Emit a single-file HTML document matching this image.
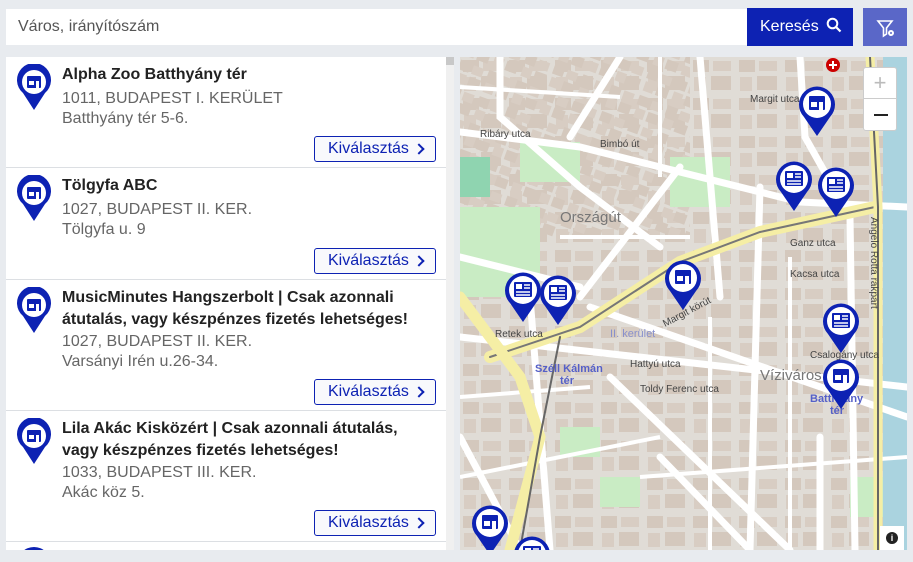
<!DOCTYPE html>
<html><head><meta charset="utf-8"><style>
*{box-sizing:border-box;margin:0;padding:0}
body{width:913px;height:562px;background:#e8ebef;font-family:"Liberation Sans",Roboto,sans-serif;position:relative;overflow:hidden}
.inp{position:absolute;left:6px;top:9px;width:741px;height:36px;background:#fff;color:#555;font-size:16px;line-height:36px;padding-left:12px}
.btn{position:absolute;left:747px;top:8px;width:106px;height:38px;background:#0d22b3;color:#fff;font-size:16px;line-height:38px;padding-left:13px}
.flt{position:absolute;left:863px;top:8px;width:44px;height:38px;background:#5a67c8}
.list{position:absolute;left:6px;top:57px;width:440px;height:493px;background:#fff;overflow:hidden}
.sb{position:absolute;left:446px;top:57px;width:8px;height:493px;background:#f0f0f0}
.sb div{width:8px;height:8px;background:#c8c8c8;margin-top:0}
.it{position:absolute;left:0;width:440px;border-bottom:1px solid #dcdfe3}
.it h3{position:absolute;left:56px;top:7px;width:370px;font-size:16px;font-weight:bold;color:#222;line-height:22px}
.it p{position:absolute;left:56px;font-size:16px;color:#666;line-height:20px}
.kb{position:absolute;left:308px;width:122px;height:26px;border:1px solid #0d22b3;border-radius:3px;color:#0d22b3;font-size:16px;line-height:24px;padding-left:13px;background:#f8f9fc}
.kb:after{content:"";position:absolute;right:12px;top:8px;width:6px;height:6px;border-top:2px solid #0d22b3;border-right:2px solid #0d22b3;transform:rotate(45deg)}
.pin{position:absolute;left:10px}
.map{position:absolute;left:460px;top:57px;width:447px;height:493px;overflow:hidden;background:#e0dcd6}
</style></head><body>
<div class="inp">Város, irányítószám</div>
<div class="btn">Keresés <svg width="16" height="16" viewBox="0 0 16 16" style="vertical-align:-2px;margin-left:3px"><circle cx="6.5" cy="6.5" r="4.8" fill="none" stroke="#fff" stroke-width="2"/><path d="M10 10l4.5 4.5" stroke="#fff" stroke-width="2.2"/></svg></div>
<div class="flt"><svg width="44" height="38"><path d="M15 13h14l-5.5 7v6l-3 2v-8z" fill="none" stroke="#fff" stroke-width="1.6"/><circle cx="28" cy="25" r="3" fill="#fff"/><circle cx="28" cy="25" r="1" fill="#5a67c8"/></svg></div>

<div class="list">
 <div class="it" style="top:0;height:111px">
  <svg class="pin" width="36" height="50" style="top:7px"><path d="M18 46L7 29A17 17 0 1 1 29 29z" fill="#0d22b3"/><circle cx="18" cy="18" r="12" fill="#fff"/><rect x="11" y="12" width="14" height="12" rx="1" fill="#0d22b3"/><rect x="13" y="17" width="5" height="4" fill="#fff"/><rect x="20" y="17" width="3" height="7" fill="#fff"/></svg>
  <h3>Alpha Zoo Batthyány tér</h3><p style="top:32px">1011, BUDAPEST I. KERÜLET<br>Batthyány tér 5-6.</p>
  <div class="kb" style="top:79px">Kiválasztás</div></div>
 <div class="it" style="top:111px;height:112px">
  <svg class="pin" width="36" height="50" style="top:7px"><path d="M18 46L7 29A17 17 0 1 1 29 29z" fill="#0d22b3"/><circle cx="18" cy="18" r="12" fill="#fff"/><rect x="11" y="12" width="14" height="12" rx="1" fill="#0d22b3"/><rect x="13" y="17" width="5" height="4" fill="#fff"/><rect x="20" y="17" width="3" height="7" fill="#fff"/></svg>
  <h3>Tölgyfa ABC</h3><p style="top:32px">1027, BUDAPEST II. KER.<br>Tölgyfa u. 9</p>
  <div class="kb" style="top:80px">Kiválasztás</div></div>
 <div class="it" style="top:223px;height:131px">
  <svg class="pin" width="36" height="50" style="top:7px"><path d="M18 46L7 29A17 17 0 1 1 29 29z" fill="#0d22b3"/><circle cx="18" cy="18" r="12" fill="#fff"/><rect x="11" y="12" width="14" height="12" rx="1" fill="#0d22b3"/><rect x="13" y="17" width="5" height="4" fill="#fff"/><rect x="20" y="17" width="3" height="7" fill="#fff"/></svg>
  <h3>MusicMinutes Hangszerbolt | Csak azonnali átutalás, vagy készpénzes fizetés lehetséges!</h3><p style="top:52px">1027, BUDAPEST II. KER.<br>Varsányi Irén u.26-34.</p>
  <div class="kb" style="top:99px">Kiválasztás</div></div>
 <div class="it" style="top:354px;height:131px">
  <svg class="pin" width="36" height="50" style="top:7px"><path d="M18 46L7 29A17 17 0 1 1 29 29z" fill="#0d22b3"/><circle cx="18" cy="18" r="12" fill="#fff"/><rect x="11" y="12" width="14" height="12" rx="1" fill="#0d22b3"/><rect x="13" y="17" width="5" height="4" fill="#fff"/><rect x="20" y="17" width="3" height="7" fill="#fff"/></svg>
  <h3>Lila Akác Kisközért | Csak azonnali átutalás, vagy készpénzes fizetés lehetséges!</h3><p style="top:52px">1033, BUDAPEST III. KER.<br>Akác köz 5.</p>
  <div class="kb" style="top:99px">Kiválasztás</div></div>
 <svg class="pin" width="36" height="20" style="position:absolute;left:10px;top:489px"><circle cx="18" cy="18" r="17" fill="#0d22b3"/></svg>
</div>
<div class="sb"><div></div></div>

<div class="map">
<svg width="447" height="493" style="position:absolute;left:0;top:0" font-family="Liberation Sans,sans-serif" font-size="10" fill="#444">
 <defs>
  <pattern id="bld" width="46" height="38" patternUnits="userSpaceOnUse">
   <rect x="3" y="3" width="16" height="12" fill="#d4c8bd"/><rect x="23" y="4" width="18" height="10" fill="#d8cdc3"/><rect x="4" y="20" width="12" height="14" fill="#d8cdc3"/><rect x="21" y="19" width="20" height="14" fill="#d4c8bd"/>
  </pattern>
  <pattern id="bld2" width="30" height="28" patternUnits="userSpaceOnUse" patternTransform="rotate(20)">
   <rect x="2" y="2" width="11" height="10" fill="#d4c8bd"/><rect x="16" y="3" width="11" height="9" fill="#d8cdc3"/><rect x="3" y="15" width="10" height="10" fill="#d8cdc3"/><rect x="16" y="15" width="12" height="10" fill="#d4c8bd"/>
  </pattern>
 </defs>
 <rect width="447" height="493" fill="url(#bld)"/>
 <rect x="0" y="0" width="230" height="180" fill="url(#bld2)"/>
 <g fill="#c9ecc4">
  <rect x="60" y="85" width="60" height="40"/><rect x="0" y="100" width="30" height="40" fill="#8fd4b0"/><rect x="210" y="100" width="60" height="50"/><rect x="0" y="150" width="80" height="90"/><rect x="100" y="370" width="40" height="30"/><rect x="140" y="420" width="40" height="30"/><rect x="390" y="420" width="40" height="40"/>
 </g>
 <rect x="423" y="0" width="24" height="493" fill="#aad3df"/>
 <g stroke="#fff" stroke-width="7" fill="none" stroke-linecap="round">
  <path d="M0 75L120 90L340 145L447 150"/><path d="M40 0L40 60L120 130L200 190"/><path d="M160 0L110 80"/><path d="M240 0L260 240"/><path d="M340 0L345 80L390 160L395 493"/><path d="M0 280L447 330"/><path d="M130 250L447 360"/><path d="M70 240L90 493"/><path d="M150 320L330 493"/><path d="M300 130L290 493"/><path d="M220 110L120 240"/><path d="M0 200L120 230"/><path d="M200 400L290 493"/><path d="M360 380L360 493"/><path d="M0 380L60 493"/>
 </g>
 <g stroke="#fff" stroke-width="4" fill="none">
  <path d="M0 30L160 40"/><path d="M200 0L200 120"/><path d="M0 420L200 380"/><path d="M250 260L250 493"/><path d="M330 200L330 493"/><path d="M180 420L447 400"/><path d="M0 340L130 330"/><path d="M100 180L230 180"/>
 </g>
 <g fill="none" stroke-linecap="round">
  <path d="M30 300L120 270L220 205L300 175L415 150" stroke="#f5eea5" stroke-width="12"/>
  <path d="M30 300L120 270L220 205L300 175L415 150" stroke="#777" stroke-width="2"/>
  <path d="M0 240L60 320L80 380L50 493" stroke="#f5eea5" stroke-width="11"/>
  <path d="M410 0L418 150L418 493" stroke="#f5eea5" stroke-width="9"/>
  <path d="M410 0L418 150L418 493" stroke="#666" stroke-width="2"/>
  <path d="M100 280L80 380L60 493" stroke="#666" stroke-width="2"/>
 </g>
 <text x="100" y="165" font-size="15" fill="#777">Országút</text>
 <text x="300" y="323" font-size="15" fill="#777">Víziváros</text>
 <text x="75" y="315" font-size="11" font-weight="bold" fill="#5560c8">Széll Kálmán</text>
 <text x="100" y="327" font-size="11" font-weight="bold" fill="#5560c8">tér</text>
 <text x="150" y="280" font-size="11" fill="#8890cc">II. kerület</text>
 <text x="205" y="270" transform="rotate(-28 205 270)">Margit körút</text>
 <text x="290" y="45">Margit utca</text>
 <text x="140" y="90">Bimbó út</text>
 <text x="20" y="80">Ribáry utca</text>
 <text x="170" y="310">Hattyú utca</text>
 <text x="350" y="301">Csalogány utca</text>
 <text x="180" y="335">Toldy Ferenc utca</text>
 <text x="35" y="280">Retek utca</text>
 <text x="330" y="189">Ganz utca</text>
 <text x="330" y="220">Kacsa utca</text>
 <text x="411" y="160" transform="rotate(90 411 160)">Angelo Rotta rakpart</text>
 <text x="350" y="345" font-weight="bold" fill="#5560c8" font-size="11">Batthyány</text>
 <text x="370" y="357" font-weight="bold" fill="#5560c8" font-size="11">tér</text>
 <circle cx="373" cy="8" r="7" fill="#c00"/><path d="M373 4v8M369 8h8" stroke="#fff" stroke-width="2"/>
</svg>
<div style="position:absolute;left:403px;top:10px;width:34px;height:64px;background:#fff;border:1px solid #ccc;border-radius:3px">
 <div style="height:31px;border-bottom:1px solid #ccc;text-align:center;font-size:22px;line-height:30px;color:#bbb">+</div>
 <div style="height:31px;position:relative"><div style="position:absolute;left:10px;top:15px;width:14px;height:2px;background:#222"></div></div>
</div>
<div style="position:absolute;left:420px;top:469px;width:24px;height:24px;background:#fff"><div style="margin:6px;width:12px;height:12px;border-radius:50%;background:#222;color:#fff;font-size:9px;text-align:center;line-height:12px;font-weight:bold">i</div></div>
<svg width="447" height="493" style="position:absolute;left:0;top:0">
 <defs>
  <g id="ps"><path d="M0 32L-13 13A18 18 0 1 1 13 13z" fill="#0d22b3"/><circle r="14" fill="#fff"/><rect x="-8" y="-8" width="16" height="14" rx="1" fill="#0d22b3"/><rect x="-6" y="-2" width="6" height="5" fill="#fff"/><rect x="2" y="-2" width="4" height="8" fill="#fff"/></g>
  <g id="pn"><path d="M0 32L-13 13A18 18 0 1 1 13 13z" fill="#0d22b3"/><circle r="14" fill="#fff"/><rect x="-9" y="-8" width="18" height="15" rx="1" fill="#0d22b3"/><rect x="-7" y="-6" width="6" height="5" fill="#fff"/><path d="M1 -5h6M1 -2h6M-7 2h14M-7 5h14" stroke="#fff" stroke-width="1.6"/></g>
 </defs>
 <use href="#ps" x="357" y="47"/><use href="#pn" x="334" y="122"/><use href="#pn" x="376" y="128"/>
 <use href="#pn" x="63" y="233"/><use href="#pn" x="98" y="236"/><use href="#ps" x="223" y="221"/>
 <use href="#pn" x="381" y="264"/><use href="#ps" x="381" y="320"/><use href="#ps" x="30" y="466"/><use href="#pn" x="72" y="497"/>
</svg>
</div>
</body></html>
